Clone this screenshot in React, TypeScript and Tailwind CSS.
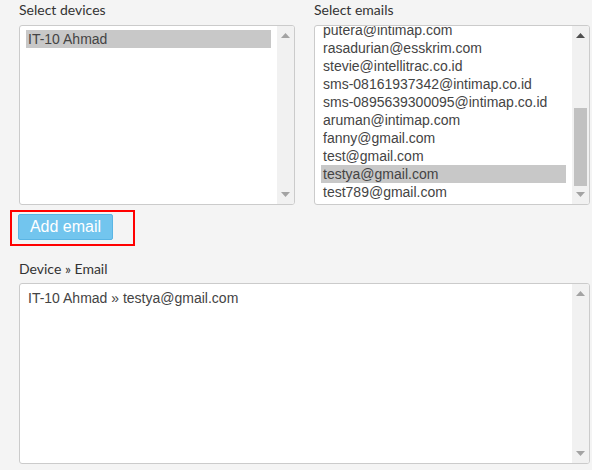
import React from "react";

const emails = [
  "putera@intimap.com",
  "rasadurian@esskrim.com",
  "stevie@intellitrac.co.id",
  "sms-08161937342@intimap.co.id",
  "sms-0895639300095@intimap.co.id",
  "aruman@intimap.com",
  "fanny@gmail.com",
  "test@gmail.com",
  "testya@gmail.com",
  "test789@gmail.com",
];

const Arrow = ({ up, dark }: { up?: boolean; dark?: boolean }) => (
  <svg width="9" height="5" viewBox="0 0 9 5">
    <path
      d={up ? "M0 5 L4.5 0 L9 5 Z" : "M0 0 L9 0 L4.5 5 Z"}
      fill={dark ? "#505050" : "#a3a3a3"}
    />
  </svg>
);

const Scrollbar = ({ thumb, upDark }: { thumb?: boolean; upDark?: boolean }) => (
  <div className="w-[17px] shrink-0 bg-[#f1f1f1] flex flex-col items-center py-[7px]">
    <Arrow up dark={upDark} />
    <div className="flex-1 w-full px-[2px] flex flex-col justify-end pt-[8px] pb-[6px]">
      {thumb && <div className="h-[78px] bg-[#c1c1c1]" />}
    </div>
    <Arrow />
  </div>
);

const Label = ({ children }: { children: React.ReactNode }) => (
  <div className="text-[14px] leading-[18px] text-[#333] font-['Lato',sans-serif]">
    {children}
  </div>
);

const Row = ({ text, selected }: { text: string; selected?: boolean }) => (
  <div
    className={`h-[18px] leading-[18px] pl-[2px] ${
      selected ? "bg-[#c8c8c8]" : ""
    }`}
  >
    {text}
  </div>
);

export default function App() {
  return (
    <div className="min-h-[470px] bg-[#f4f4f4] pl-[19px] pr-[2px] pt-[1px] font-['Liberation_Sans',Arial,sans-serif] text-[14px] text-[#444]">
      <div className="flex gap-[19px]">
        <div className="w-[276px] shrink-0">
          <Label>Select devices</Label>
          <div className="mt-[6px] h-[180px] border border-[#cbcbcb] rounded-[3px] bg-white flex overflow-hidden">
            <div className="flex-1 pt-[4px] pl-[6px] pr-[6px]">
              <Row text="IT-10 Ahmad" selected />
            </div>
            <Scrollbar />
          </div>
        </div>
        <div className="w-[276px] shrink-0">
          <Label>Select emails</Label>
          <div className="mt-[6px] h-[180px] border border-[#cbcbcb] rounded-[3px] bg-white flex overflow-hidden">
            <div className="flex-1 pl-[6px] pr-[6px] overflow-hidden">
              <div className="-mt-[5px]">
                {emails.map((e) => (
                  <Row key={e} text={e} selected={e === "testya@gmail.com"} />
                ))}
              </div>
            </div>
            <Scrollbar thumb upDark />
          </div>
        </div>
      </div>

      <div className="mt-[5px] -ml-[9px] w-[125px] h-[36px] border-2 border-[#ff0000] pl-[6px] pt-[2px]">
        <button className="w-[95px] h-[26px] bg-[#72c5ee] border border-[#5ab5e4] rounded-[2px] text-white text-[16px] leading-[24px] font-['Liberation_Sans',Arial,sans-serif]">
          Add email
        </button>
      </div>

      <div className="mt-[14px]">
        <Label>Device » Email</Label>
      </div>
      <div className="mt-[5px] h-[181px] border border-[#cbcbcb] rounded-[3px] bg-white flex overflow-hidden">
        <div className="flex-1 pl-[8px] pt-[5px] text-[#444] leading-[18px]">
          IT-10 Ahmad » testya@gmail.com
        </div>
        <Scrollbar />
      </div>
    </div>
  );
}
